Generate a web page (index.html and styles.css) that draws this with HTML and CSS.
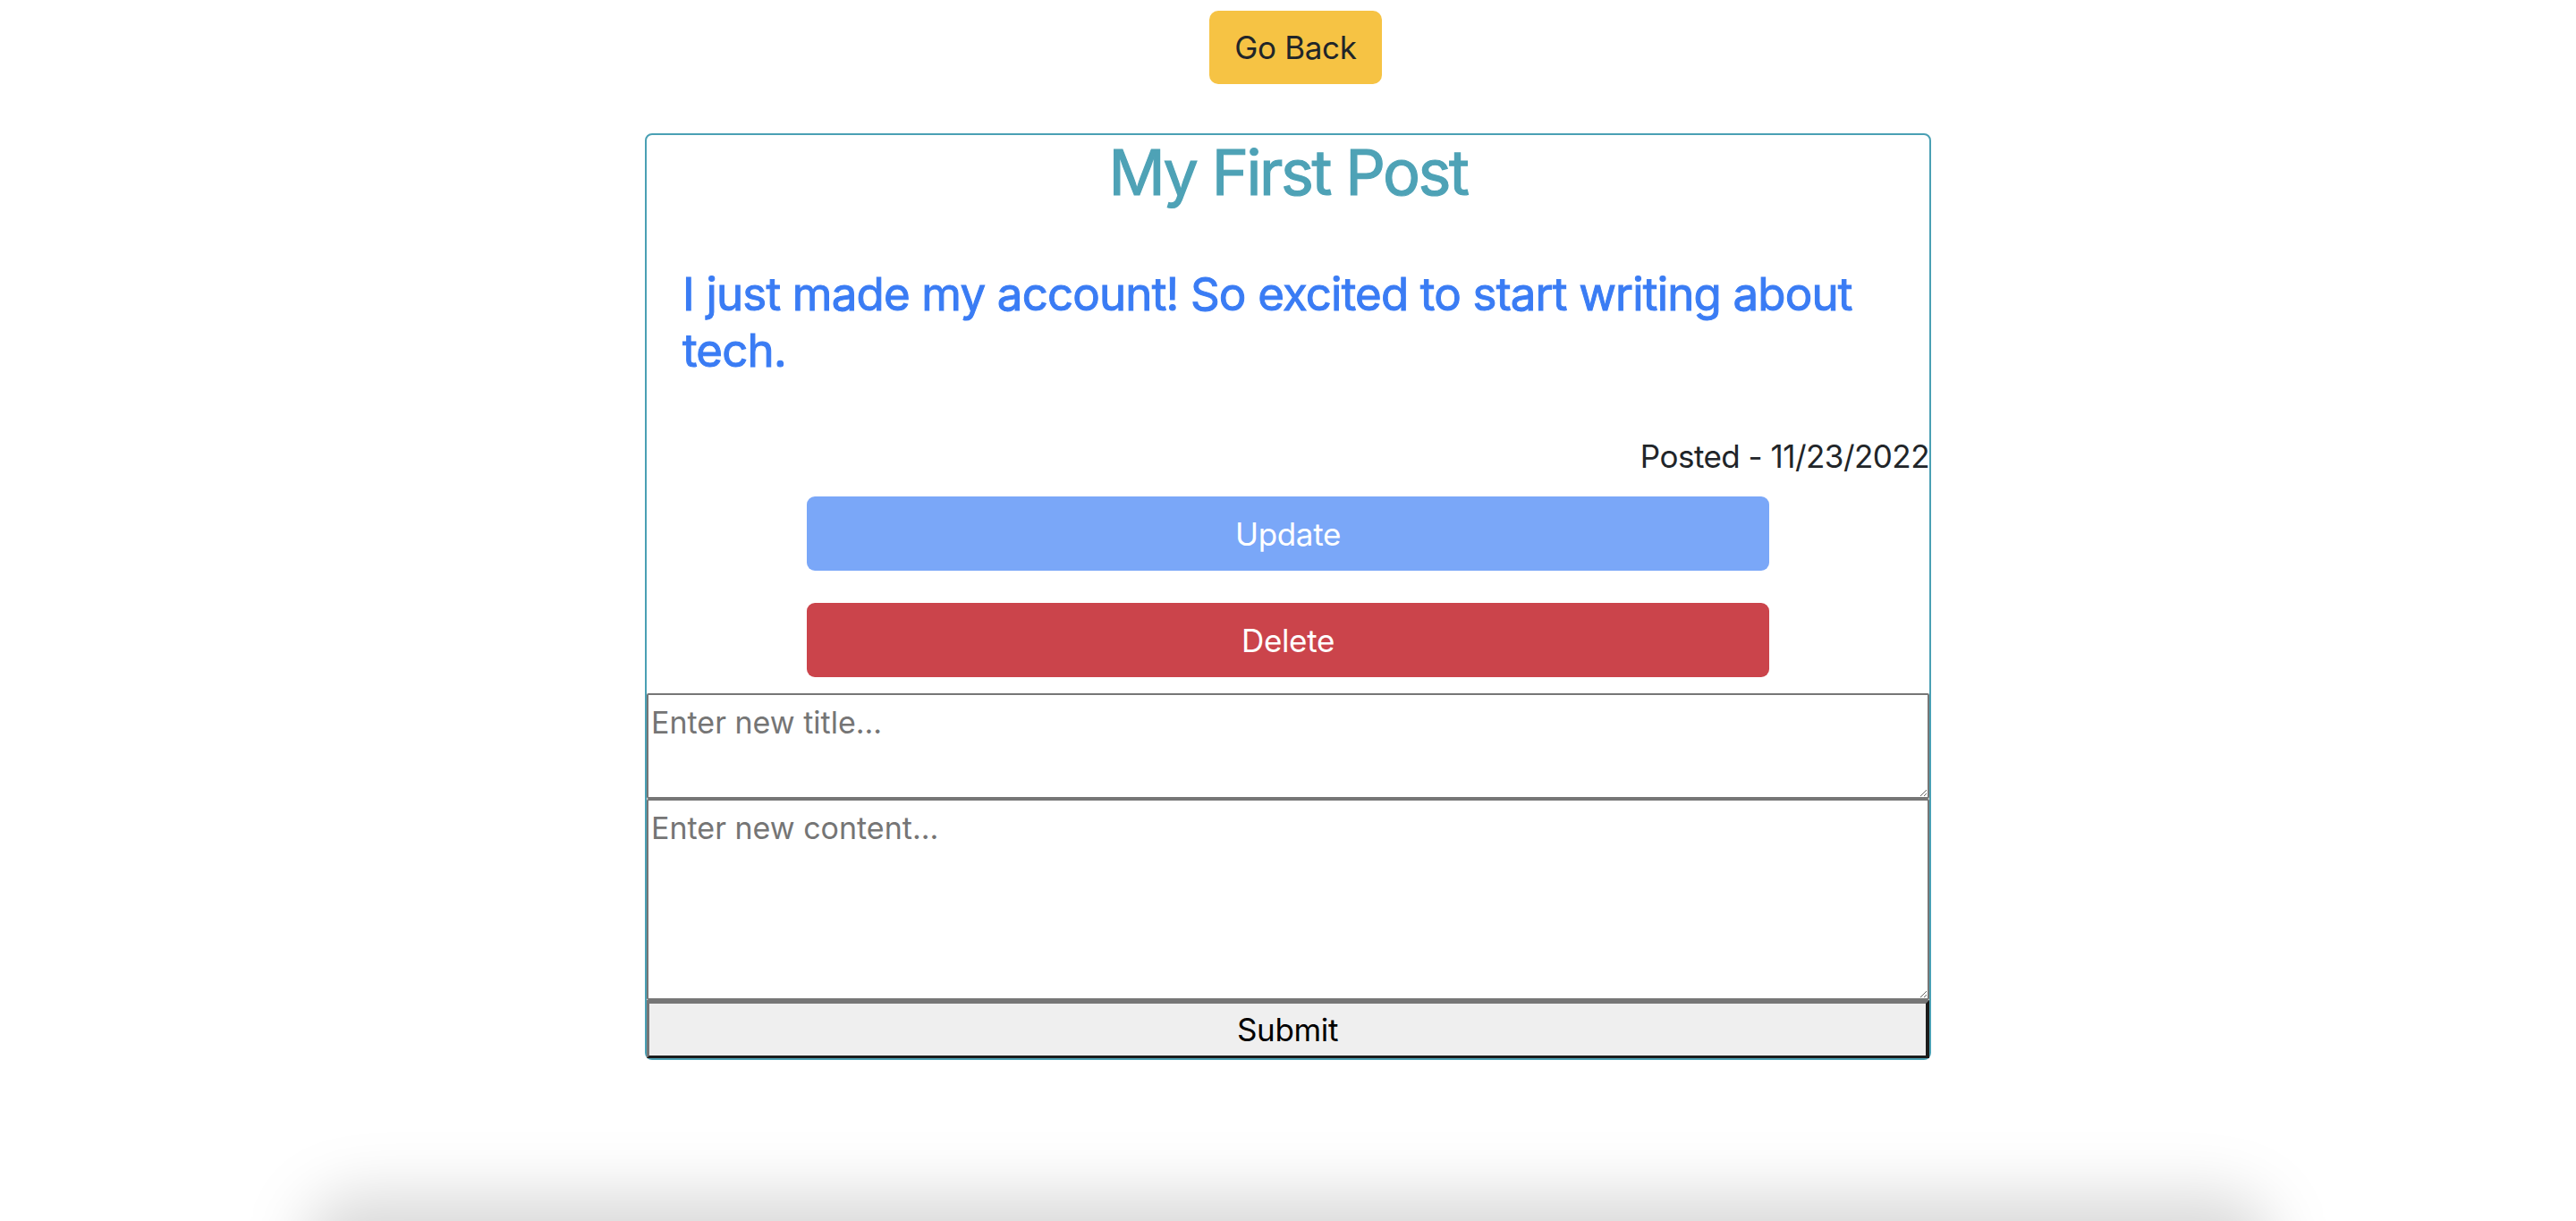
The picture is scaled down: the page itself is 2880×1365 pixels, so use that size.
FILE: index.html
```html
<!DOCTYPE html>
<html lang="en">
<head>
<meta charset="utf-8">
<title>My First Post</title>
<link rel="stylesheet" href="styles.css">
</head>
<body>
<div class="page">
  <button class="back-btn" type="button">Go Back</button>
  <div class="post-card">
    <h1 class="post-title">My First Post</h1>
    <p class="post-content">I just made my account! So excited to start writing about tech.</p>
    <div class="post-date">Posted - 11/23/2022</div>
    <div class="actions">
      <button class="action-btn update-btn" type="button">Update</button>
      <button class="action-btn delete-btn" type="button">Delete</button>
    </div>
    <form class="edit-form">
      <textarea class="edit-title" placeholder="Enter new title..."></textarea>
      <textarea class="edit-content" placeholder="Enter new content..."></textarea>
      <button class="submit-btn" type="button">Submit</button>
    </form>
  </div>
</div>
<div class="window-shadow"></div>
</body>
</html>
```

FILE: styles.css
```css
html, body {
  margin: 0;
  padding: 0;
  background: #ffffff;
}

body {
  font-family: Inter, "Noto Sans", "Liberation Sans", sans-serif;
  color: #212529;
  overflow: hidden;
  height: 1365px;
}

.page {
  display: flex;
  flex-direction: column;
  align-items: center;
  padding-top: 12px;
}

.back-btn {
  height: 82px;
  padding: 0 28px;
  margin-left: 17px;
  border: none;
  border-radius: 10px;
  background: #f6c344;
  color: #212529;
  font-family: inherit;
  font-size: 35px;
  letter-spacing: -0.01em;
}

.post-card {
  box-sizing: border-box;
  width: 1438px;
  margin-top: 55px;
  border: 2px solid #4aa0b4;
  border-radius: 8px;
  display: flex;
  flex-direction: column;
}

.post-title {
  margin: 0;
  font-size: 70px;
  line-height: 84px;
  font-weight: 400;
  -webkit-text-stroke: 1.2px #4ea2b6;
  text-align: center;
  color: #4ea2b6;
  letter-spacing: -0.035em;
}

.post-content {
  margin: 62px 0 0 0;
  padding: 0 40px;
  font-size: 51px;
  line-height: 63px;
  font-weight: 400;
  -webkit-text-stroke: 1px #3a7cf4;
  color: #3a7cf4;
  letter-spacing: -0.016em;
}

.post-date {
  margin-top: 66px;
  font-size: 35px;
  line-height: 42px;
  text-align: right;
  color: #212529;
  letter-spacing: -0.015em;
}

.actions {
  display: flex;
  flex-direction: column;
  align-items: center;
  gap: 36px;
  margin-top: 24px;
}

.action-btn {
  width: 1076px;
  height: 83px;
  border: none;
  border-radius: 9px;
  color: #ffffff;
  font-family: inherit;
  font-size: 35px;
  letter-spacing: -0.01em;
}

.update-btn {
  background: #7aa7f8;
}

.delete-btn {
  background: #cb444b;
}

.edit-form {
  display: flex;
  flex-direction: column;
  margin: 18px 0 0 0;
}

.edit-title,
.edit-content {
  display: block;
  box-sizing: border-box;
  width: 100%;
  margin: 0;
  border: 2px solid #767676;
  border-radius: 2px;
  padding: 10px 3px 4px 3px;
  font-family: inherit;
  font-size: 34px;
  color: #212529;
  background: #ffffff;
}

.edit-title::placeholder,
.edit-content::placeholder {
  color: #757575;
}

.edit-title {
  height: 118px;
}

.edit-content {
  height: 225px;
}

.submit-btn {
  box-sizing: border-box;
  width: 100%;
  height: 65px;
  margin: 0;
  padding: 0;
  border-style: solid;
  border-width: 4px 4px 3px 3px;
  border-color: #767676 #1c1c1c #1c1c1c #767676;
  background: #efefef;
  color: #000000;
  font-family: inherit;
  font-size: 35px;
  letter-spacing: -0.01em;
}

.window-shadow {
  position: fixed;
  left: 340px;
  right: 340px;
  bottom: -110px;
  height: 140px;
  background: rgba(0, 0, 0, 0.15);
  filter: blur(34px);
  border-radius: 60px;
  pointer-events: none;
}
```
